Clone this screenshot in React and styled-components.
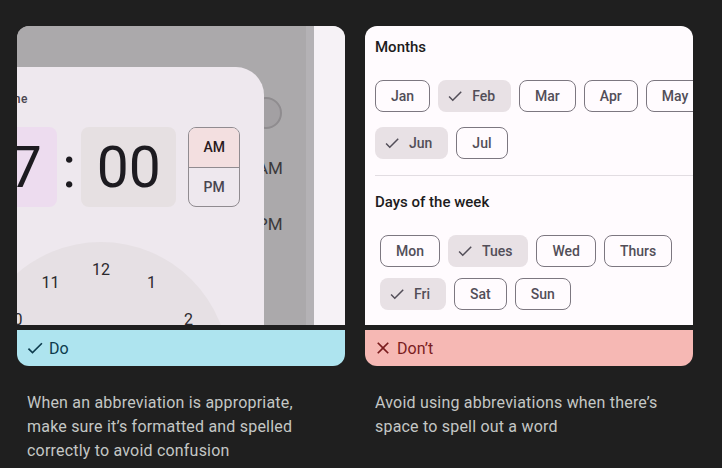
import React from 'react'
import styled, { createGlobalStyle } from 'styled-components'

const GlobalStyle = createGlobalStyle`
  html, body {
    margin: 0;
    background: #1f1f1f;
  }
  body {
    font-family: Roboto, "Noto Sans", sans-serif;
  }
`

const Page = styled.main`
  display: flex;
  gap: 20px;
  width: 722px;
  height: 468px;
  box-sizing: border-box;
  padding: 26px 0 0 17px;
  background: #1f1f1f;
  overflow: hidden;
`

const Card = styled.section`
  width: 328px;
  flex-shrink: 0;
  display: flex;
  flex-direction: column;
  gap: 5px;
`

const Preview = styled.div`
  height: 299px;
  border-radius: 12px 12px 0 0;
  overflow: hidden;
  background: ${p => p.$bg};
`

const TimePreview = styled(Preview)`
  display: flex;
`

const ChipPreview = styled(Preview)`
  padding: 11px 0 0 10px;
  box-sizing: border-box;
`

const Caption = styled.div`
  height: 36px;
  border-radius: 0 0 12px 12px;
  display: flex;
  align-items: center;
  gap: 4px;
  padding-left: 8px;
  font-size: 16px;
  font-weight: 400;
  background: ${p => (p.$good ? '#aee4ef' : '#f6b8b4')};
  color: ${p => (p.$good ? '#0c3b4d' : '#7a1c1e')};

  svg {
    width: 20px;
    height: 20px;
    fill: currentColor;
  }
`

const Description = styled.p`
  margin: 20px 0 0;
  padding: 0 10px;
  font-size: 16px;
  line-height: 24px;
  letter-spacing: 0.2px;
  color: #c4c7c5;
`

/* time picker mock */

const Scrim = styled.div`
  flex: 1;
  position: relative;
  background: #aba9ab;
`

const Strip = styled.div`
  width: 8px;
  background: #b4b2b5;
`

const SidePanel = styled.div`
  width: 31px;
  background: #f6f2f6;
`

const BackToggle = styled.div`
  position: absolute;
  left: 233px;
  top: 71px;
  width: 32px;
  height: 32px;
  box-sizing: border-box;
  border-radius: 50%;
  background: #a3a0a3;
  border: 2px solid #8f8c8f;
`

const BackLabel = styled.span`
  position: absolute;
  left: 240px;
  top: ${p => p.$top}px;
  font-size: 17px;
  line-height: 20px;
  color: #3b393b;
`

const Dialog = styled.div`
  position: absolute;
  left: -79px;
  top: 41px;
  width: 326px;
  height: 320px;
  box-sizing: border-box;
  padding: 25px 24px 0;
  border-radius: 28px;
  background: #eee8ee;
`

const DialogTitle = styled.div`
  font-size: 12px;
  line-height: 14px;
  font-weight: 500;
  letter-spacing: 0.5px;
  color: #49454f;
`

const TimeRow = styled.div`
  display: flex;
  align-items: flex-start;
  margin-top: 21px;
`

const TimeBox = styled.div`
  width: 96px;
  height: 80px;
  border-radius: 8px;
  display: flex;
  align-items: center;
  justify-content: center;
  font-size: 57px;
  color: #1d1b20;
  background: ${p => (p.$active ? '#eddcef' : '#e6e0e2')};
`

const Colon = styled.div`
  width: 24px;
  height: 80px;
  display: flex;
  align-items: center;
  justify-content: center;
  font-size: 57px;
  color: #1d1b20;
`

const PeriodToggle = styled.div`
  margin-left: 12px;
  width: 52px;
  height: 80px;
  box-sizing: border-box;
  border: 1px solid #908b90;
  border-radius: 8px;
  overflow: hidden;
  display: flex;
  flex-direction: column;
`

const Period = styled.div`
  flex: 1;
  display: flex;
  align-items: center;
  justify-content: center;
  font-size: 14px;
  font-weight: 500;
  color: ${p => (p.$active ? '#2a1a1e' : '#49454f')};
  background: ${p => (p.$active ? '#f3dfe0' : 'transparent')};
  & + & {
    border-top: 1px solid #908b90;
  }
`

const Dial = styled.div`
  position: relative;
  width: 256px;
  height: 256px;
  margin: 35px auto 0;
  border-radius: 50%;
  background: #e6e0e4;
`

const DialNumber = styled.span`
  position: absolute;
  width: 40px;
  height: 24px;
  margin: -12px 0 0 -20px;
  display: flex;
  align-items: center;
  justify-content: center;
  font-size: 16px;
  color: #2b292d;
`

/* chips mock */

const SectionTitle = styled.h3`
  margin: ${p => p.$mt || 0}px 0 0;
  font-size: 15px;
  line-height: 20px;
  font-weight: 500;
  color: #1d1b20;
`

const ChipRow = styled.div`
  display: flex;
  gap: 8px;
  margin-top: ${p => p.$mt}px;
  padding-left: ${p => p.$indent || 0}px;
`

const Chip = styled.span`
  flex-shrink: 0;
  height: 32px;
  box-sizing: border-box;
  display: inline-flex;
  align-items: center;
  gap: 8px;
  border-radius: 8px;
  font-size: 14px;
  font-weight: 500;
  color: #524e58;
  border: 1px solid ${p => (p.$selected ? 'transparent' : '#7c7780')};
  background: ${p => (p.$selected ? '#e8e1e5' : 'transparent')};
  padding: ${p => (p.$selected ? '0 15px 0 7px' : '0 15px')};

  svg {
    width: 18px;
    height: 18px;
    fill: #524e58;
  }
`

const Divider = styled.hr`
  margin: 16px 0 0;
  border: 0;
  height: 1px;
  background: #e2dde2;
`

const CheckIcon = () => (
  <svg viewBox="0 0 24 24">
    <path d="M9 16.17L4.83 12l-1.42 1.41L9 19 21 7l-1.41-1.41z" />
  </svg>
)

const CloseIcon = () => (
  <svg viewBox="0 0 24 24">
    <path d="M19 6.41L17.59 5 12 10.59 6.41 5 5 6.41 10.59 12 5 17.59 6.41 19 12 13.41 17.59 19 19 17.59 13.41 12z" />
  </svg>
)

const hours = [12, 1, 2, 3, 4, 5, 6, 7, 8, 9, 10, 11]

const months = [
  [['Jan'], ['Feb', true], ['Mar'], ['Apr'], ['May']],
  [['Jun', true], ['Jul']],
]

const days = [
  [['Mon'], ['Tues', true], ['Wed'], ['Thurs']],
  [['Fri', true], ['Sat'], ['Sun']],
]

const ChipItem = ({ label, selected }) => (
  <Chip $selected={selected}>
    {selected && <CheckIcon />}
    {label}
  </Chip>
)

const TimePicker = () => (
  <TimePreview $bg="#aba9ab">
    <Scrim>
      <BackToggle />
      <BackLabel $top={132}>AM</BackLabel>
      <BackLabel $top={188}>PM</BackLabel>
      <Dialog>
        <DialogTitle>Select time</DialogTitle>
        <TimeRow>
          <TimeBox $active>07</TimeBox>
          <Colon>:</Colon>
          <TimeBox>00</TimeBox>
          <PeriodToggle>
            <Period $active>AM</Period>
            <Period>PM</Period>
          </PeriodToggle>
        </TimeRow>
        <Dial>
          {hours.map((h, i) => {
            const a = (i * Math.PI) / 6
            return (
              <DialNumber
                key={h}
                style={{ left: 128 + 101 * Math.sin(a), top: 128 - 101 * Math.cos(a) }}
              >
                {h}
              </DialNumber>
            )
          })}
        </Dial>
      </Dialog>
    </Scrim>
    <Strip />
    <SidePanel />
  </TimePreview>
)

const ChipsPanel = () => (
  <ChipPreview $bg="#fffbfe">
    <SectionTitle>Months</SectionTitle>
    {months.map((row, i) => (
      <ChipRow key={i} $mt={i === 0 ? 23 : 15}>
        {row.map(([label, sel]) => (
          <ChipItem key={label} label={label} selected={sel} />
        ))}
      </ChipRow>
    ))}
    <Divider />
    <SectionTitle $mt={16}>Days of the week</SectionTitle>
    {days.map((row, i) => (
      <ChipRow key={i} $mt={i === 0 ? 23 : 11} $indent={5}>
        {row.map(([label, sel]) => (
          <ChipItem key={label} label={label} selected={sel} />
        ))}
      </ChipRow>
    ))}
  </ChipPreview>
)

const App = () => (
  <>
    <GlobalStyle />
    <Page>
      <Card>
        <TimePicker />
        <Caption $good>
          <CheckIcon />
          Do
        </Caption>
        <Description>
          When an abbreviation is appropriate,
          <br />
          make sure it’s formatted and spelled
          <br />
          correctly to avoid confusion
        </Description>
      </Card>
      <Card>
        <ChipsPanel />
        <Caption>
          <CloseIcon />
          Don’t
        </Caption>
        <Description>
          Avoid using abbreviations when there’s
          <br />
          space to spell out a word
        </Description>
      </Card>
    </Page>
  </>
)

export default App
